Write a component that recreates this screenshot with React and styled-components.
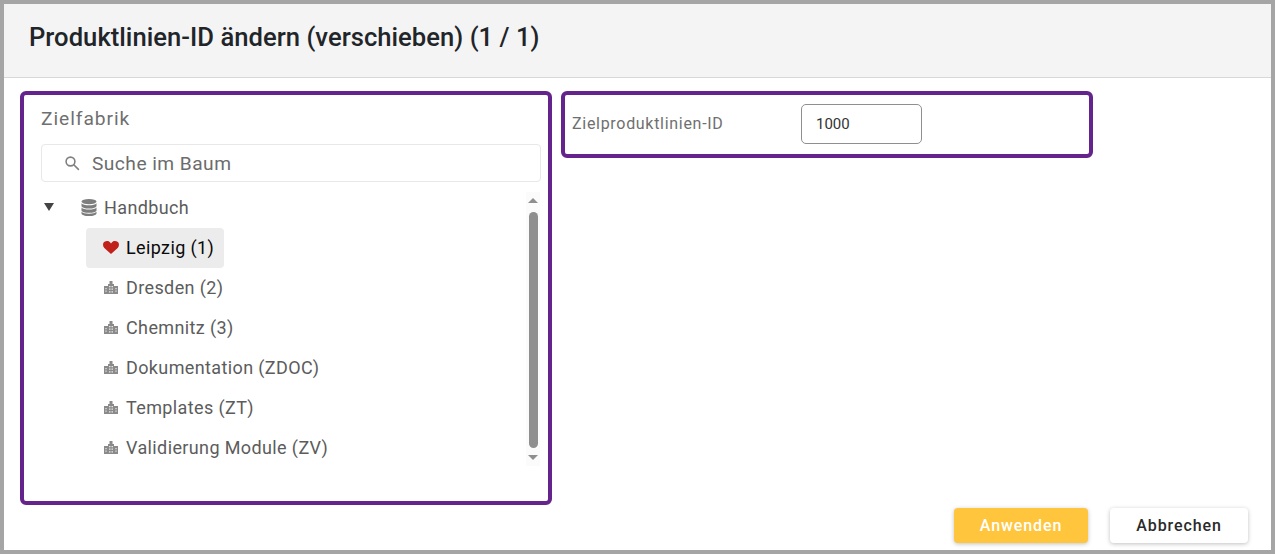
import React from "react";
import styled, { createGlobalStyle } from "styled-components";

const Global = createGlobalStyle`
  html, body { margin: 0; padding: 0; background: #fff; }
  body { font-family: Roboto, "Liberation Sans", sans-serif; }
  * { box-sizing: border-box; }
`;

const Frame = styled.div`
  width: 1275px; height: 554px; border: 4px solid #a5a5a5;
  display: flex; flex-direction: column; background: #fff;
`;
const Header = styled.header`
  height: 74px; flex: none; background: #f4f4f4; border-bottom: 1px solid #d8d8d8;
  display: flex; align-items: center; padding: 0 0 8px 25px;
`;
const Title = styled.h1`
  margin: 0; font-size: 25.6px; font-weight: 500; color: #212529; letter-spacing: 0.03px;
`;
const Body = styled.main`
  flex: 1; min-height: 0; display: flex; align-items: flex-start; gap: 9px; padding: 13px 16px 0;
`;
const Panel = styled.section`
  width: 532px; border: 4px solid #64248b; border-radius: 6px; background: #fff;
`;
const TreePanel = styled(Panel)`
  height: 414px; padding: 12px 7px 0 17px; display: flex; flex-direction: column;
`;
const PanelTitle = styled.div`
  font-size: 19.2px; line-height: 24px; color: #6f6f6f; letter-spacing: 0.95px;
`;
const Search = styled.div`
  margin: 13px 0 0 0; height: 38px; border: 1px solid #e8e8e8; border-radius: 4px;
  display: flex; align-items: center; gap: 12px; padding-left: 22px;
  font-size: 19.2px; color: #6c6c6c; letter-spacing: 0.45px;
`;
const TreeArea = styled.div`
  display: flex; margin-top: 10px;
`;
const Tree = styled.div`
  flex: 1; min-width: 0;
`;
const RootRow = styled.div`
  height: 30px; display: flex; align-items: center; font-size: 18px; color: #5c5c5c; letter-spacing: 0.38px;
  padding-left: 3px;
`;
const Caret = styled.svg`
  width: 10px; height: 8px; flex: none; margin-right: 27px;
`;
const RootIcon = styled.svg`
  width: 16px; height: 17px; flex: none; margin-right: 7px;
`;
const Items = styled.div`
  display: flex; flex-direction: column; align-items: flex-start; gap: 0; margin: 6px 0 0 45px;
`;
const Item = styled.div`
  height: 40px; padding: 0 10px 2px 17px; border-radius: 4px; display: flex; align-items: center; gap: 7px;
  font-size: 18px; letter-spacing: 0.38px;
  color: ${(p) => (p.$active ? "#0a0a0a" : "#5c5c5c")};
  background: ${(p) => (p.$active ? "#ececec" : "transparent")};
`;
const HeartIcon = styled.svg`
  width: 16px; height: 13px; flex: none;
`;
const BuildingIcon = styled.svg`
  width: 14px; height: 13px; flex: none; margin: 0 1px;
`;
const Scroll = styled.div`
  width: 14px; flex: none; height: 274px; background: #fbfbfb; margin-right: 1px;
  display: flex; flex-direction: column; align-items: center;
`;
const Arrow = styled.svg`
  width: 10px; height: 5px; flex: none; margin: ${(p) => p.$m};
`;
const Thumb = styled.div`
  width: 9px; height: 236px; flex: none; margin-top: 9px; background: #8f8f8f; border-radius: 5px;
`;
const IdPanel = styled(Panel)`
  height: 67px; display: flex; align-items: center; padding: 0 0 1px 7px;
`;
const FieldLabel = styled.label`
  width: 229px; margin-bottom: 2px; font-size: 16px; color: #6f6f6f; letter-spacing: 0.7px;
`;
const Field = styled.input`
  width: 121px; height: 40px; border: 1px solid #8f8f8f; border-radius: 5px; padding: 0 14px;
  font: 400 15px Roboto, sans-serif; color: #333; outline: none; letter-spacing: 0; background: #fff;
`;
const Footer = styled.footer`
  flex: none; display: flex; justify-content: flex-end; gap: 22px; padding: 3px 23px 7px 0;
`;
const Button = styled.button`
  width: ${(p) => p.$w}px; height: 35px; border: 0; border-radius: 4px;
  font: 500 16px Roboto, sans-serif; letter-spacing: 0.9px;
  color: ${(p) => (p.$primary ? "#fff" : "#2a2a2a")};
  background: ${(p) => (p.$primary ? "#ffc53d" : "#fff")};
  box-shadow: 0 1px 4px rgba(0,0,0,0.25);
`;

const SearchIcon = () => (
  <svg width="16" height="16" viewBox="0 0 16 16" fill="none" stroke="#808080" strokeWidth="1.6" style={{ flex: "none" }}>
    <circle cx="6.5" cy="6.5" r="4.4" />
    <path d="M9.8 9.8 14.4 14.4" strokeLinecap="round" />
  </svg>
);
const Database = () => (
  <RootIcon viewBox="0 0 16 17" fill="#7d7d7d">
    <ellipse cx="8" cy="2.6" rx="7.5" ry="2.6" />
    <path d="M.5 4.2C1.6 5.6 4.6 6.3 8 6.3s6.4-.7 7.5-2.1v2.7C15.5 8.4 12 9.5 8 9.5S.5 8.4.5 6.9Z" />
    <path d="M.5 8.4C1.6 9.8 4.6 10.5 8 10.5s6.4-.7 7.5-2.1v3C15.5 12.8 12 13.8 8 13.8S.5 12.8.5 11.4Z" />
    <path d="M.5 12.8C1.6 14 4.6 14.8 8 14.8s6.4-.8 7.5-2v1.6C15.5 15.9 12 17 8 17S.5 15.9.5 14.4Z" />
  </RootIcon>
);
const Heart = () => (
  <HeartIcon viewBox="0 0 16 13" fill="#c0211a">
    <path d="M8 13 1.3 6.9C-.5 5-.3 2 1.5.8 3.4-.4 5.8 0 7 1.3l1 1.1 1-1.1C10.2 0 12.6-.4 14.5.8c1.8 1.2 2 4.2.2 6.1Z" />
  </HeartIcon>
);
const Building = () => (
  <BuildingIcon viewBox="0 0 14 13">
    <path
      fill="#8a8a8a"
      fillRule="evenodd"
      d="M0 5h4V3h1.5V0h3v3H10v2h4v8H0ZM1.5 7v1.2h1V7Zm0 2.6v1.2h1V9.6ZM5.2 5v1.2h1.2V5Zm2.4 0v1.2h1.2V5ZM5.2 7.6v1.2h1.2V7.6Zm2.4 0v1.2h1.2V7.6Zm-2.4 2.6v1.2h1.2v-1.2Zm2.4 0v1.2h1.2v-1.2ZM11.5 7v1.2h1V7Zm0 2.6v1.2h1V9.6Z"
    />
  </BuildingIcon>
);

const items = ["Dresden (2)", "Chemnitz (3)", "Dokumentation (ZDOC)", "Templates (ZT)", "Validierung Module (ZV)"];

export default function App() {
  return (
    <>
      <Global />
      <Frame>
        <Header>
          <Title>Produktlinien-ID ändern (verschieben) (1 / 1)</Title>
        </Header>
        <Body>
          <TreePanel>
            <PanelTitle>Zielfabrik</PanelTitle>
            <Search>
              <SearchIcon />
              Suche im Baum
            </Search>
            <TreeArea>
              <Tree>
                <RootRow>
                  <Caret viewBox="0 0 10 8"><path d="M0 0h10L5 8Z" fill="#444" /></Caret>
                  <Database />
                  Handbuch
                </RootRow>
                <Items>
                  <Item $active><Heart />Leipzig (1)</Item>
                  {items.map((t) => (
                    <Item key={t}><Building />{t}</Item>
                  ))}
                </Items>
              </Tree>
              <Scroll>
                <Arrow $m="6px 0 0" viewBox="0 0 10 5"><path d="M0 5h10L5 0Z" fill="#8f8f8f" /></Arrow>
                <Thumb />
                <Arrow $m="7px 0 0" viewBox="0 0 10 5"><path d="M0 0h10L5 5Z" fill="#8f8f8f" /></Arrow>
              </Scroll>
            </TreeArea>
          </TreePanel>
          <IdPanel>
            <FieldLabel>Zielproduktlinien-ID</FieldLabel>
            <Field defaultValue="1000" readOnly />
          </IdPanel>
        </Body>
        <Footer>
          <Button $primary $w={134}>Anwenden</Button>
          <Button $w={138}>Abbrechen</Button>
        </Footer>
      </Frame>
    </>
  );
}
